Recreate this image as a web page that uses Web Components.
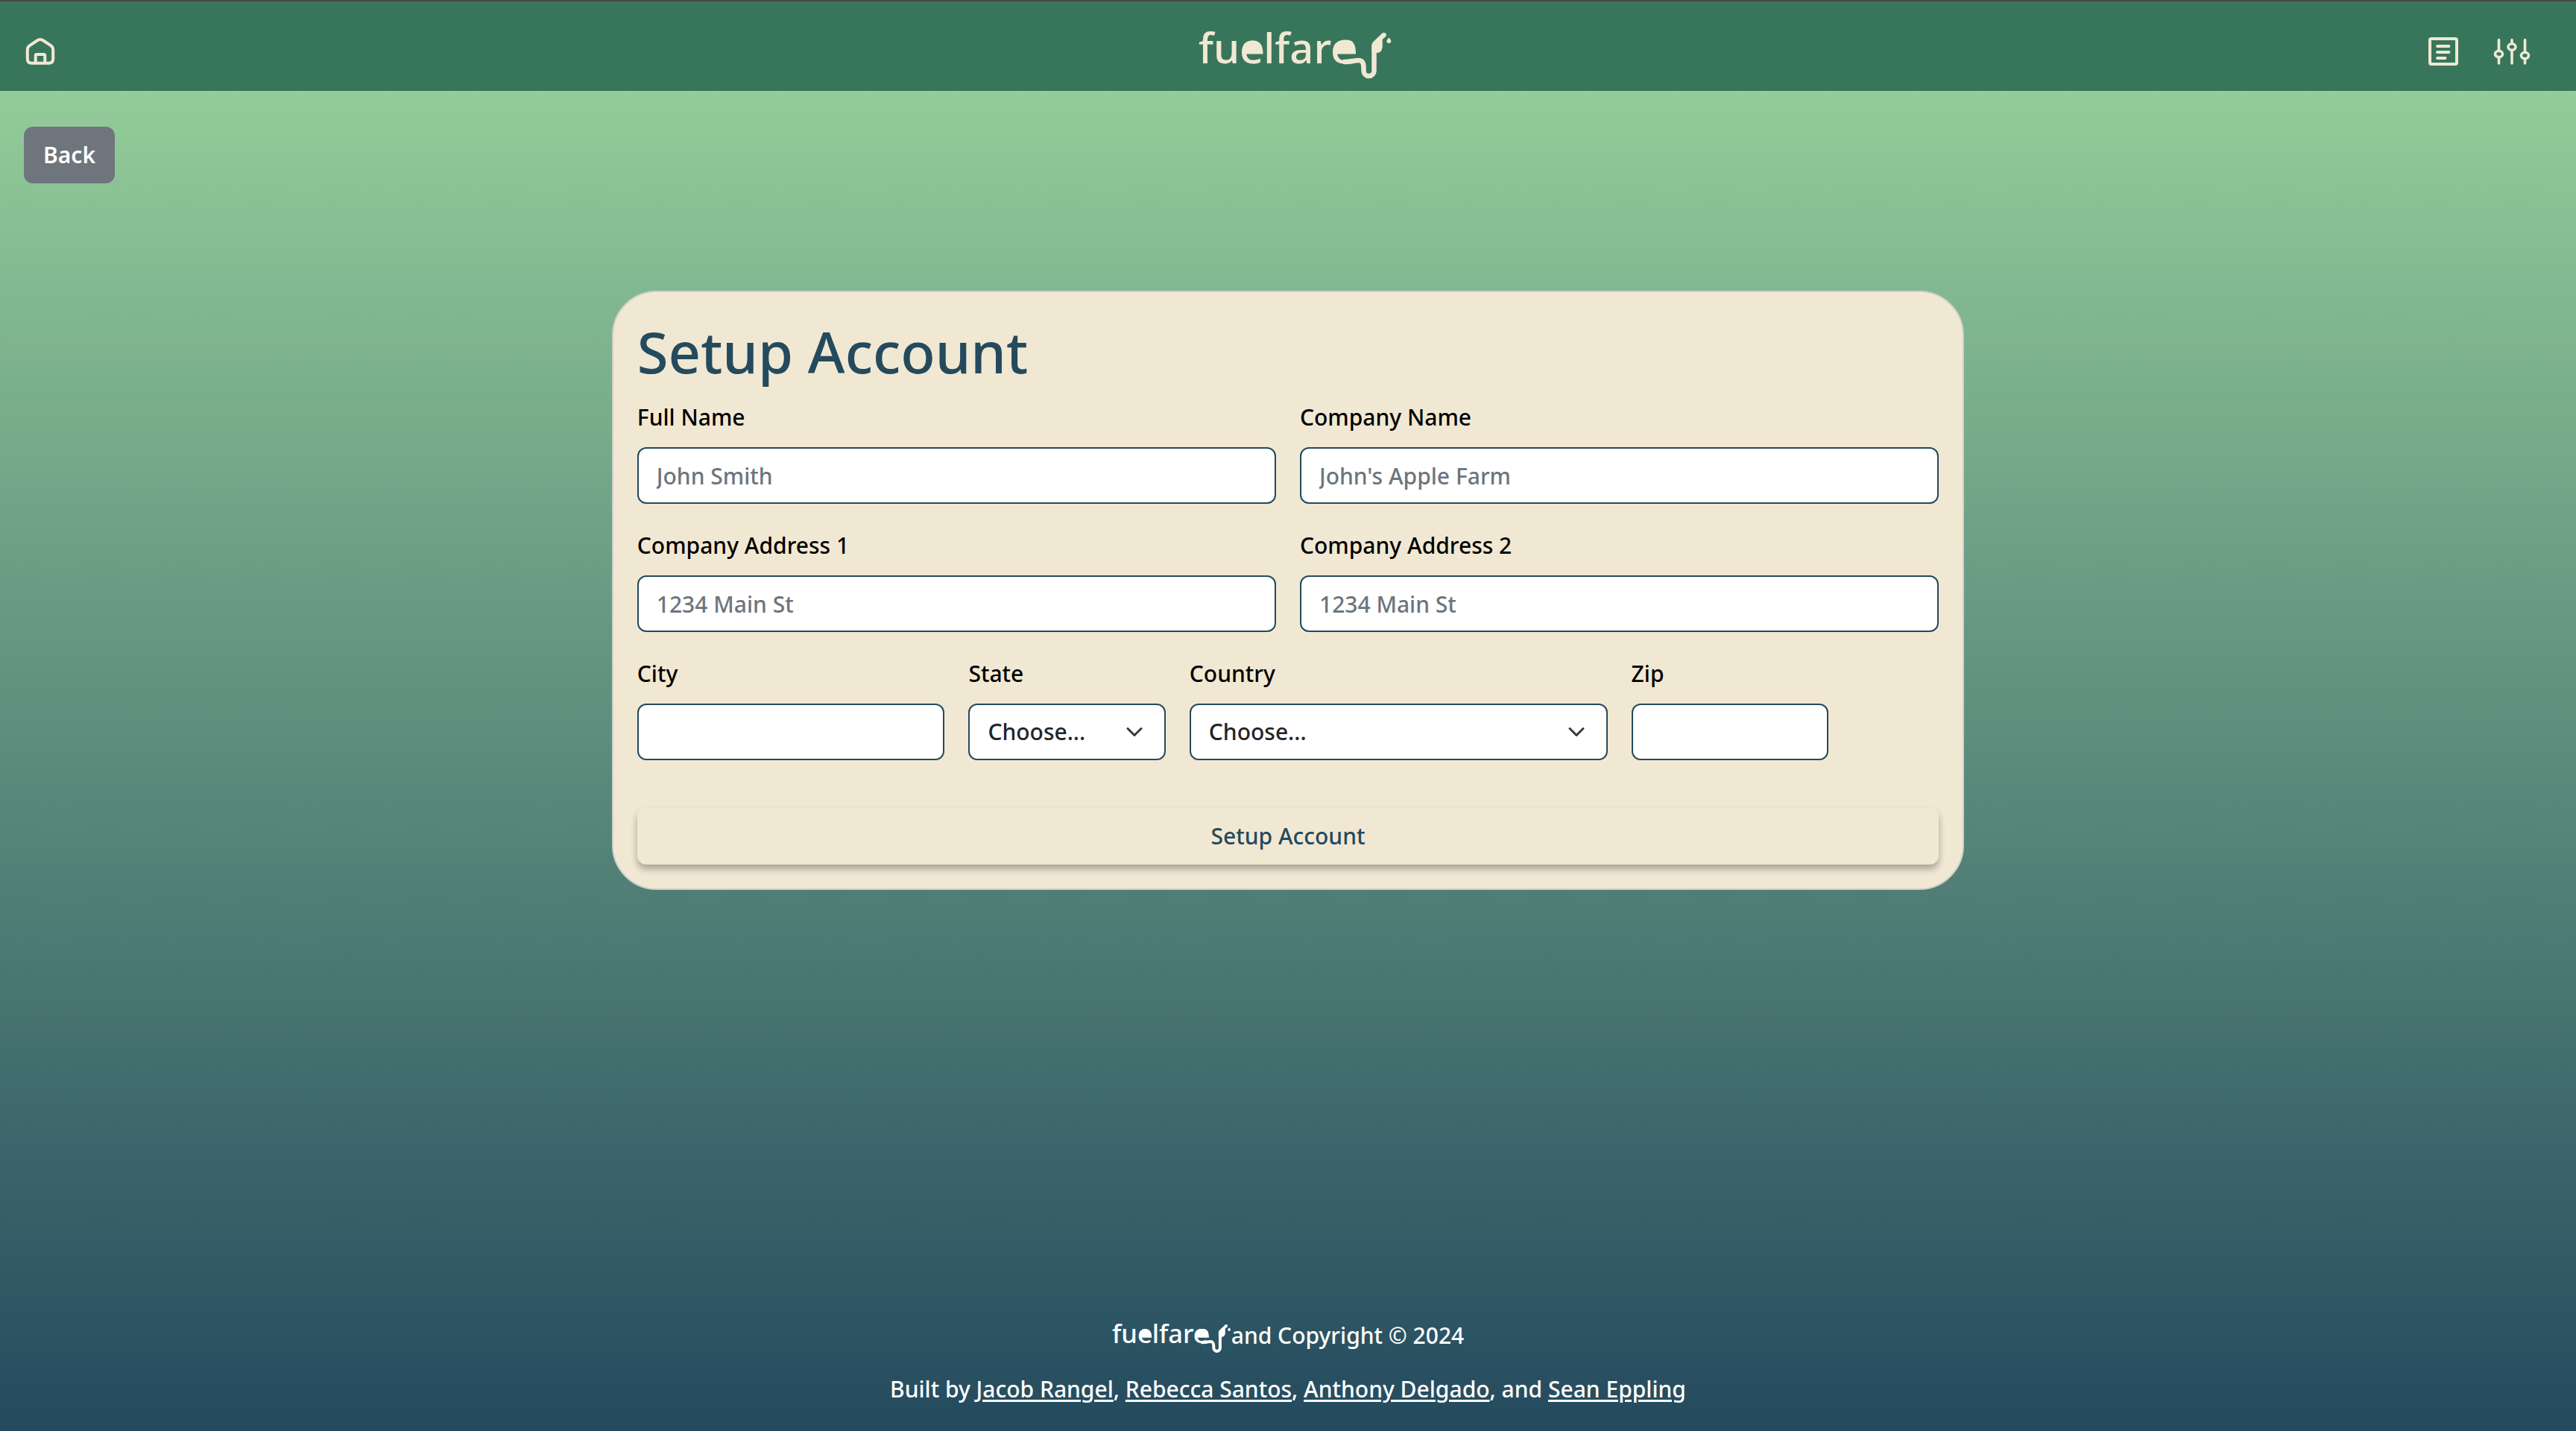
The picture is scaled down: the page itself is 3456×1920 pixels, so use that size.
<!DOCTYPE html>
<html lang="en">
<head>
<meta charset="utf-8">
<title>fuelfare – Setup Account</title>
<style>
  :root {
    --cream: #f1e8d3;
    --navy: #244a5e;
    --green: #38765c;
    --mint: #93cc99;
  }
  body {
    margin: 0;
    background: var(--navy);
    font: 500 30px/48px "Noto Sans", "Open Sans", sans-serif;
    color: #000;
  }
</style>
</head>
<body>
<fuel-app></fuel-app>
<script>
const define = (name, html, setup) => {
  const template = document.createElement('template');
  template.innerHTML = html;
  customElements.define(name, class extends HTMLElement {
    constructor() {
      super();
      this.attachShadow({ mode: 'open' }).append(template.content.cloneNode(true));
    }
    connectedCallback() { if (setup) setup(this, this.shadowRoot); }
  });
};

// Wordmark: the letters are text, the filled bowls and the fuel hose are shapes.
define('fuel-logo', `
  <style>
    :host { display: inline-block; width: 260px; color: inherit; }
    svg { display: block; width: 100%; height: auto; overflow: visible; }
    text { font: 500 56px "Noto Sans", sans-serif; fill: currentColor; }
  </style>
  <svg viewBox="0 0 260 64" role="img" aria-label="fuelfares">
    <text x="0" y="43">fuelfare</text>
    <path fill="currentColor" d="M60 29C60 18 65 12.500 73 12.500C82 12.500 86.500 18 86.500 30.500H60Z"/>
    <path fill="currentColor" d="M181 29C181 17 187 11.500 196 11.500H200C207 12 211 17 211 30.500H181Z"/>
    <path fill="none" stroke="currentColor" stroke-width="6.5"
      d="M194 40.800C206 41.500 208 39 214 39C221 39 221.500 44 221.500 50V53A7 7 0 0 0 235.500 53V22"/>
    <path fill="currentColor" d="M232.200 26V20C232.200 17 233 15.500 235 13.500L246.500 2.500C249.500 0 254 4 251 7L246.700 11V20C246.500 25 244.500 29 239 29Z"/>
    <path fill="currentColor" d="M255 8.500C257 10 258.500 11.500 258.300 13A3 3 0 0 1 252.300 13C252.500 11.500 254 10.500 255 8.500Z"/>
  </svg>`);

define('app-header', `
  <style>
    :host { display: grid; grid-template-columns: 1fr auto 1fr; align-items: center;
      height: 106px; padding: 14px 62px 0 34px; border-top: 2px solid #4a484a;
      background: var(--green); color: var(--cream); box-sizing: content-box; }
    a { color: inherit; display: block; justify-self: start; }
    svg { display: block; fill: none; stroke: currentColor; stroke-linecap: round; overflow: visible; }
    .logo { padding: 10px 0 0 48px; line-height: 0; }
    nav { display: flex; justify-content: flex-end; align-items: center; gap: 48px; }
  </style>
  <a href="#home" aria-label="Home">
    <svg width="40" height="36" viewBox="0 0 40 36" stroke-width="4">
      <path d="M20 2C18.500 2 17.300 2.500 15.800 3.500L5.800 10.200C3.600 11.800 2.800 13.300 2.800 16V28C2.800 32 4.500 33.800 8.500 33.800H31.500C35.500 33.800 37.200 32 37.200 28V16C37.200 13.300 36.400 11.800 34.200 10.200L24.200 3.500C22.700 2.500 21.500 2 20 2Z"/>
      <path d="M13.700 33V23.500Q13.700 22 15.200 22H24.800Q26.300 22 26.300 23.500V33"/>
    </svg>
  </a>
  <a class="logo" href="#"><fuel-logo></fuel-logo></a>
  <nav>
    <a href="#orders" aria-label="Orders">
      <svg width="40" height="38" viewBox="0 0 40 38" stroke-width="4">
        <rect x="2" y="2" width="36" height="34" rx="2"/>
        <path stroke-width="3.800" d="M12 12H27.500M12 20H27.500M12 28H22.500"/>
      </svg>
    </a>
    <a href="#settings" aria-label="Settings">
      <svg width="48" height="36" viewBox="0 0 48 36" stroke-width="3.600">
        <path d="M6.500 2.500V16.500M6.500 26V34M24 2.500V7M24 17V34M41.500 2.500V18.500M41.500 28V34"/>
        <ellipse cx="6.500" cy="21.500" rx="5" ry="4.200"/>
        <ellipse cx="24" cy="12" rx="5" ry="4.200"/>
        <ellipse cx="41.500" cy="23.500" rx="5" ry="4.200"/>
      </svg>
    </a>
  </nav>`);

define('back-button', `
  <style>
    :host { display: inline-block; }
    button { font: inherit; font-weight: 600; color: #fff; background: #6f757d; border: 0;
      border-radius: 12px; height: 76px; padding: 0 26px; display: block; }
  </style>
  <button type="button"><slot></slot></button>`);

define('form-field', `
  <style>
    :host { display: block; min-width: 0; }
    label { display: block; margin-bottom: 16px; }
    input, select { display: block; box-sizing: border-box; width: 100%; height: 76px; margin: 0;
      padding: 0 24px; font: inherit; color: #212529; background: #fff;
      border: 2px solid var(--navy); border-radius: 12px; }
    input::placeholder { color: #6c757d; opacity: 1; }
    select { appearance: none; background: #fff no-repeat right 24px center / 32px 24px
      url("data:image/svg+xml,%3Csvg xmlns='http://www.w3.org/2000/svg' viewBox='0 0 16 16'%3E%3Cpath fill='none' stroke='%23343a40' stroke-linecap='round' stroke-linejoin='round' stroke-width='2' d='m2 5 6 6 6-6'/%3E%3C/svg%3E"); }
  </style>
  <label for="control"></label>`,
  (host, root) => {
    const label = root.querySelector('label');
    label.textContent = host.getAttribute('label');
    const choices = host.getAttribute('choices');
    const control = document.createElement(choices ? 'select' : 'input');
    control.id = 'control';
    if (choices) for (const c of choices.split('|')) control.add(new Option(c));
    else { control.type = 'text'; control.placeholder = host.getAttribute('hint') || ''; }
    root.append(control);
  });

define('setup-card', `
  <style>
    :host { display: block; box-sizing: border-box; width: 52.5%; min-width: 1200px;
      padding: 32px; background: var(--cream); border: 2px solid #d0cfcd; border-radius: 60px; }
    h1 { margin: 0 0 16px; font-size: 76px; line-height: 96px; font-weight: 500; color: var(--navy); }
    form { display: grid; grid-template-columns: repeat(12, 1fr); gap: 32px; }
    .half { grid-column: span 6; }
    .third { grid-column: span 4; }
    .quarter { grid-column: span 3; }
    .sixth { grid-column: span 2; }
    button { grid-column: 1 / -1; margin-top: 32px; height: 76px; font: inherit; color: var(--navy);
      border: 0; border-radius: 12px; background: var(--cream);
      box-shadow: 0 6px 10px rgba(0,0,0,.3); }
  </style>
  <h1>Setup Account</h1>
  <form>
    <form-field class="half" label="Full Name" hint="John Smith"></form-field>
    <form-field class="half" label="Company Name" hint="John's Apple Farm"></form-field>
    <form-field class="half" label="Company Address 1" hint="1234 Main St"></form-field>
    <form-field class="half" label="Company Address 2" hint="1234 Main St"></form-field>
    <form-field class="quarter" label="City"></form-field>
    <form-field class="sixth" label="State" choices="Choose..."></form-field>
    <form-field class="third" label="Country" choices="Choose..."></form-field>
    <form-field class="sixth" label="Zip"></form-field>
    <button type="submit">Setup Account</button>
  </form>`);

define('app-footer', `
  <style>
    :host { display: flex; flex-direction: column; align-items: center; gap: 24px;
      padding: 32px; color: #fff; }
    p { margin: 0; }
    .copy { display: flex; align-items: center; height: 48px; }
    fuel-logo { width: 160px; padding-top: 8px; }
    a { color: inherit; text-decoration-thickness: 3px; text-underline-offset: 3px; }
  </style>
  <p class="copy"><fuel-logo></fuel-logo><span>and Copyright © 2024</span></p>
  <p>Built by <a href="#jacob">Jacob Rangel</a>, <a href="#rebecca">Rebecca Santos</a>, <a href="#anthony">Anthony Delgado</a>, and <a href="#sean">Sean Eppling</a></p>`);

define('fuel-app', `
  <style>
    :host { display: flex; flex-direction: column; min-height: 100vh; }
    .page { flex: 1; display: flex; flex-direction: column;
      background: linear-gradient(var(--mint), var(--navy)); }
    main { flex: 1; display: flex; flex-direction: column; align-items: flex-start;
      gap: 144px; padding: 48px 32px; }
    setup-card { align-self: center; width: 52.5vw; }
  </style>
  <app-header></app-header>
  <div class="page">
    <main>
      <back-button>Back</back-button>
      <setup-card></setup-card>
    </main>
    <app-footer></app-footer>
  </div>`);
</script>
</body>
</html>
